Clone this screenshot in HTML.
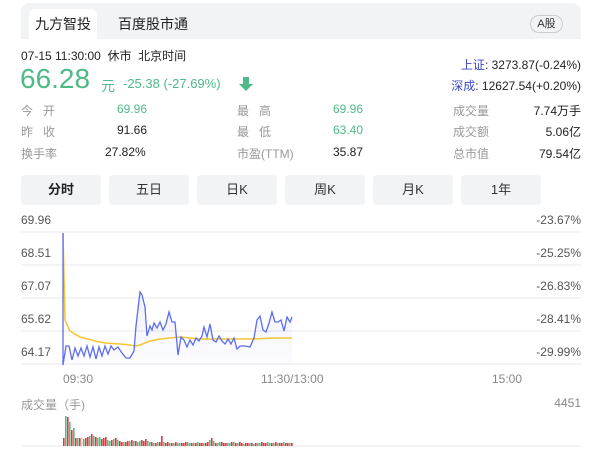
<!DOCTYPE html>
<html><head><meta charset="utf-8"><style>
*{margin:0;padding:0;box-sizing:border-box}
body{width:601px;height:457px;background:#fff;font-family:"Liberation Sans","Noto Sans CJK SC",sans-serif;position:relative;overflow:hidden;color:#222}
.a{position:absolute;white-space:nowrap}
.hdr{left:21px;top:3px;width:560px;height:36px;background:#f2f3f5;border-radius:8px 8px 0 0}
.tab{top:9px;height:30px;font-size:14px;line-height:30px;text-align:center}
.g{color:#999;font-size:12px}
.btn{top:175px;width:80px;height:30px;background:#f2f3f5;border-radius:4px;font-size:13px;line-height:30px;text-align:center;color:#333}
.f12{font-size:12px}
.grn{color:#4fb987}
.ax{font-size:12px;color:#555}
</style></head><body>
<div class="a hdr"></div>
<div class="a tab" style="left:29px;width:68px;background:#fff;border-radius:6px 6px 0 0">九方智投</div>
<div class="a tab" style="left:113px;width:80px">百度股市通</div>
<div class="a" style="left:530px;top:15px;width:33px;height:18px;border:1px solid #ccc;border-radius:9px;font-size:11px;line-height:16px;text-align:center;color:#333">A股</div>
<div class="a f12" style="left:21px;top:47px;color:#222">07-15 11:30:00 &nbsp;休市 &nbsp;北京时间</div>
<div class="a grn" style="left:20px;top:63px;font-size:28px">66.28</div>
<div class="a grn" style="left:101px;top:76px;font-size:14px">元</div>
<div class="a grn" style="left:123px;top:76px;font-size:13px">-25.38 (-27.69%)</div>
<svg class="a" style="left:238px;top:76px" width="16" height="16"><path d="M5 1h6v7h4l-7 7-7-7h4z" fill="#4fb987"/></svg>
<div class="a f12" style="left:455px;top:56px;text-align:right;width:126px"><span style="color:#3a48c8">上证</span>: 3273.87(-0.24%)</div>
<div class="a f12" style="left:435px;top:77px;text-align:right;width:146px"><span style="color:#3a48c8">深成</span>: 12627.54(+0.20%)</div>
<div class="a g" style="left:21px;top:102px">今 &nbsp;&nbsp;开</div>
<div class="a g" style="left:21px;top:123px">昨 &nbsp;&nbsp;收</div>
<div class="a g" style="left:21px;top:145px">换手率</div>
<div class="a f12 grn" style="left:117px;top:102px">69.96</div>
<div class="a f12" style="left:117px;top:123px">91.66</div>
<div class="a f12" style="left:105px;top:145px">27.82%</div>
<div class="a g" style="left:237px;top:102px">最 &nbsp;&nbsp;高</div>
<div class="a g" style="left:237px;top:123px">最 &nbsp;&nbsp;低</div>
<div class="a g" style="left:237px;top:145px">市盈(TTM)</div>
<div class="a f12 grn" style="left:333px;top:102px">69.96</div>
<div class="a f12 grn" style="left:333px;top:123px">63.40</div>
<div class="a f12" style="left:333px;top:145px">35.87</div>
<div class="a g" style="left:453px;top:102px">成交量</div>
<div class="a g" style="left:453px;top:123px">成交额</div>
<div class="a g" style="left:453px;top:145px">总市值</div>
<div class="a f12" style="left:481px;top:102px;width:100px;text-align:right">7.74万手</div>
<div class="a f12" style="left:481px;top:123px;width:100px;text-align:right">5.06亿</div>
<div class="a f12" style="left:481px;top:145px;width:100px;text-align:right">79.54亿</div>
<div class="a btn" style="left:21px;font-weight:bold;color:#222">分时</div>
<div class="a btn" style="left:109px">五日</div>
<div class="a btn" style="left:197px">日K</div>
<div class="a btn" style="left:285px">周K</div>
<div class="a btn" style="left:373px">月K</div>
<div class="a btn" style="left:461px">1年</div>
<div class="a ax" style="left:21px;top:213px">69.96</div>
<div class="a ax" style="left:21px;top:246px">68.51</div>
<div class="a ax" style="left:21px;top:279px">67.07</div>
<div class="a ax" style="left:21px;top:312px">65.62</div>
<div class="a ax" style="left:21px;top:345px">64.17</div>
<div class="a ax" style="left:481px;top:213px;width:100px;text-align:right">-23.67%</div>
<div class="a ax" style="left:481px;top:246px;width:100px;text-align:right">-25.25%</div>
<div class="a ax" style="left:481px;top:279px;width:100px;text-align:right">-26.83%</div>
<div class="a ax" style="left:481px;top:312px;width:100px;text-align:right">-28.41%</div>
<div class="a ax" style="left:481px;top:345px;width:100px;text-align:right">-29.99%</div>
<div class="a ax" style="left:63px;top:372px;color:#888">09:30</div>
<div class="a ax" style="left:261px;top:372px;color:#888">11:30/13:00</div>
<div class="a ax" style="left:492px;top:372px;color:#888">15:00</div>
<div class="a ax" style="left:21px;top:396px;color:#999">成交量（手)</div>
<div class="a ax" style="left:481px;top:396px;width:100px;text-align:right;color:#888">4451</div>
<svg class="a" style="left:0;top:0" width="601" height="457">
<g stroke="#f0f0f2" stroke-width="1.5">
<line x1="21" y1="232" x2="581" y2="232"/><line x1="21" y1="265" x2="581" y2="265"/><line x1="21" y1="298" x2="581" y2="298"/><line x1="21" y1="331" x2="581" y2="331"/><line x1="21" y1="364" x2="581" y2="364"/><line x1="21" y1="446" x2="581" y2="446"/>
</g>
<defs><linearGradient id="gr" x1="0" y1="0" x2="0" y2="1"><stop offset="0" stop-color="#5d6cf0" stop-opacity=".15"/><stop offset="1" stop-color="#5d6cf0" stop-opacity=".02"/></linearGradient></defs>
<polygon fill="url(#gr)" points="63,233 63,365 66,346 69,346 72,360 75,348 78,356 81,348 84,356 87,346 90,357 93,347 96,359 99,347 102,356 105,346 108,354 111,346 114,350 118,347 122,353 126,358 130,358 134,351 136,326 140,292 142,295 145,307 147,336 150,326 152,330 154,323 157,328 160,322 163,330 166,324 169,312 172,322 175,322 178,355 181,337 184,340 187,347 190,340 193,345 196,338 199,341 202,336 204,327 207,337 210,324 213,340 216,342 219,336 222,341 225,344 228,339 231,344 234,338 237,349 240,346 245,346 250,347 254,338 257,320 260,316 263,330 266,332 269,323 272,312 275,322 278,322 281,320 284,331 287,317 290,322 292,317 292,364 63,364"/>
<polyline fill="none" stroke="#f3c433" stroke-width="1.5" points="63,233 65,320 70,331 80,337 95,341 105,343 120,344 130,345 135,346 140,345 150,341 160,339 180,337 200,339 250,339 275,338 292,338"/>
<polyline fill="none" stroke="#5d6cf0" stroke-width="1.3" points="63,233 63,365 66,346 69,346 72,360 75,348 78,356 81,348 84,356 87,346 90,357 93,347 96,359 99,347 102,356 105,346 108,354 111,346 114,350 118,347 122,353 126,358 130,358 134,351 136,326 140,292 142,295 145,307 147,336 150,326 152,330 154,323 157,328 160,322 163,330 166,324 169,312 172,322 175,322 178,355 181,337 184,340 187,347 190,340 193,345 196,338 199,341 202,336 204,327 207,337 210,324 213,340 216,342 219,336 222,341 225,344 228,339 231,344 234,338 237,349 240,346 245,346 250,347 254,338 257,320 260,316 263,330 266,332 269,323 272,312 275,322 278,322 281,320 284,331 287,317 290,322 292,317"/>
<g id="vb"></g>
</svg>
<script>
var g=document.getElementById('vb'),s='';
var h=[8,30,29,24,16,18,8,8,8,9,7,8,9,10,12,10,9,8,9,7,8,9,6,5,6,7,8,6,5,4,4,4,5,5,6,5,5,4,5,6,5,7,5,4,4,3,3,4,4,10,4,3,4,3,3,3,4,3,3,3,3,4,4,3,3,3,3,4,3,3,3,3,4,6,8,5,3,3,4,4,3,3,3,3,4,4,3,3,4,3,2,3,3,3,3,2,3,3,3,4,3,3,4,3,3,3,4,3,3,3,4,3,3,3,3];
for(var i=0;i<h.length;i++){var x=63+i*2;if(x>292)break;var col=i==2||i==9?'#ddd':((i*7+3)%5<2?'#e8333a':((i*3)%4==0?'#e8333a':'#4fc08d'));if(i==1)col='#4fc08d';if(i==2)col='#e8333a';s+='<rect x="'+x+'" y="'+(446-h[i])+'" width="1.6" height="'+h[i]+'" fill="'+col+'"/>';}
g.innerHTML=s;
</script>
</body></html>
